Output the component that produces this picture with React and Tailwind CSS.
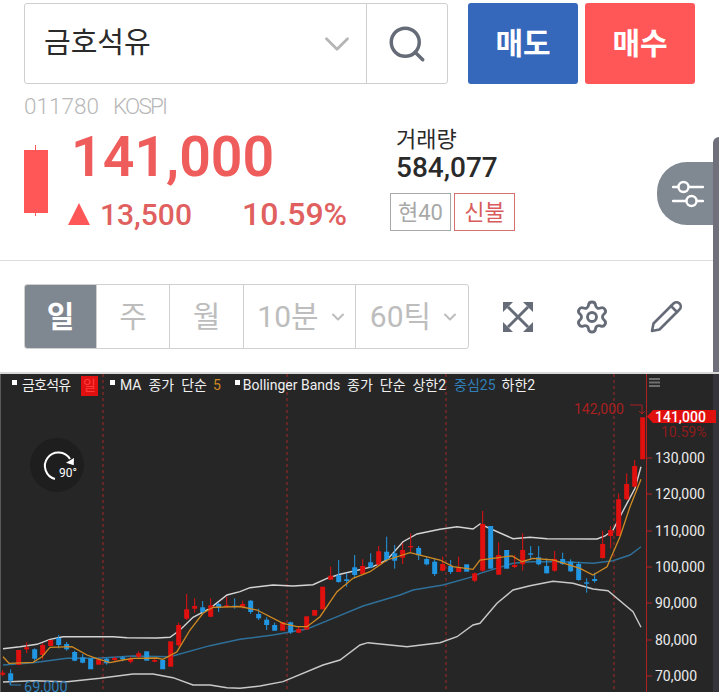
import React from "react";
import { ChevronDown, Search, Settings } from "lucide-react";

const FONT = { fontFamily: "Roboto, 'Noto Sans CJK KR', sans-serif" };

// [colour, bodyTop, bodyBottom, wickTop, wickBottom], one candle every 8px
const CANDLES = [
  ["r", 672.7, 674.7, 670, 676], ["b", 673.3, 680.7, 669.3, 685], ["r", 650, 665], ["r", 647.3, 649.3, 642.3, 653.3],
  ["b", 649.3, 658.7, 648.3, 660.7], ["r", 645, 655, 643.3, 659.3], ["r", 640, 646], ["b", 638, 645, 635, 648.3],
  ["b", 644, 649.3, 642, 650.7], ["b", 652, 660.7, 650.7, 661.3], ["b", 657.3, 662.7, 654, 663.3], ["b", 658.3, 669.3],
  ["r", 659.3, 664.7], ["b", 658.7, 663.3, 658, 664.7], ["r", 658, 660, 656.7, 662], ["b", 657.3, 659.3, 656, 661.3],
  ["r", 658.3, 661.7, 656.7, 663.3], ["r", 653.3, 656.7, 651.3, 658.3], ["b", 651.3, 660.7], ["r", 660, 661.7, 658.3, 662.3],
  ["b", 660, 669.3], ["r", 641.3, 666.7], ["r", 625, 645.3, 622.7, 646.7], ["r", 609.3, 618.7, 594, 620],
  ["r", 606, 608.7, 598.3, 612.7], ["b", 607.3, 612, 601, 614], ["r", 605.3, 616.7, 598.3, 617.3], ["b", 604, 608, 602.7, 612],
  ["r", 605.3, 607, 596.7, 607.3], ["b", 605.7, 607, 598.3, 608.7],
  ["r", 604, 606.7, 600.7, 608.7], ["b", 600.7, 612, 600, 614], ["b", 614, 618.3, 608.7, 620], ["b", 619.7, 625, 617.3, 630],
  ["b", 625, 630.7, 622.7, 630.7], ["r", 622, 630.7], ["b", 622.3, 632.3, 621.7, 634], ["r", 629, 632.7, 626.7, 633.3],
  ["r", 616.3, 629.7], ["r", 610, 615.7], ["r", 586.7, 609.3], ["r", 575.7, 579.7, 566.7, 580],
  ["b", 575.3, 582, 560, 582.7], ["b", 579.3, 581, 573.3, 586.7], ["b", 567.3, 575, 555, 578.3], ["r", 566, 574, 559.3, 574.7],
  ["b", 562.3, 567.3, 553.3, 568.3], ["r", 551.3, 564.7, 546, 565.3], ["b", 551.7, 560, 536.7, 561.7], ["b", 553.3, 560.7, 545, 568.7],
  ["r", 550, 557.7, 543.3, 564], ["r", 546, 547.3, 533.3, 552.7], ["b", 548, 555.3, 546, 560], ["b", 559, 564.3, 556.7, 565.3],
  ["b", 561.7, 574, 558.3, 576], ["r", 564, 570.7, 556.7, 571.3], ["b", 566, 572, 560, 574], ["r", 567.3, 572, 556.7, 572],
  ["b", 564.3, 571.7], ["r", 573.3, 580.7, 572.7, 582],
  ["r", 524, 570.7, 511, 571.7], ["b", 526, 568.7], ["r", 555, 574.7, 542.3, 574.7], ["b", 550, 568.7],
  ["r", 565, 567, 555, 568.3], ["r", 550, 564.3, 533.3, 570.7], ["b", 553.3, 554.7, 546, 560], ["b", 557.3, 564.3, 546, 565.3],
  ["b", 566, 573.3, 558.3, 573.3], ["r", 559, 570.7, 551, 571.7], ["b", 559, 564, 552.7, 565], ["b", 561.7, 571.3, 559.3, 572],
  ["b", 564, 580, 561.7, 580.7], ["b", 582.3, 583.7, 578.3, 592.7], ["b", 579, 581, 572.7, 582.7], ["r", 544, 558, 530.7, 558.7],
  ["r", 530, 536, 526, 548.3], ["r", 499.3, 536, 493.3, 536], ["r", 484, 499.3, 473.3, 500], ["r", 466, 486.7, 460, 487.3],
  ["r", 417.3, 459.3],
];

const UPPER = "3,648.7 20,646.7 37,644.3 50,639.3 63,636.7 113,636.7 127,637.7 157,638 170,637.3 180,630 193,617.3 210,608.3 227,595 240,591.7 250,587.7 273,585 293,586 313,584.7 327,578.3 340,574.3 373,566.7 387,560 403,541.7 417,534 440,529.3 457,526.7 473,529 480,524 513,538.7 530,537.3 547,538.7 597,539 605,536 613,530 627,503.3 635,488.3 641,466.7";
const LOWER = "3,682 33,680.7 67,681.7 100,678.3 133,674 153,674 173,677.7 193,685 210,685 227,687.7 240,688.3 260,686 283,681.7 323,665 340,660 360,645 368,642.7 407,646.7 440,642.7 457,636.7 473,625 480,623.3 497,603.3 513,590 530,585.7 553,581.3 573,583.3 593,589 608,590.7 633,611.7 641,627.3";
const MIDDLE = "3,665 33,662.7 67,658.3 97,658.3 133,656 170,656.7 210,645.7 240,639.3 273,635 307,629 333,618.3 363,606 400,595 413,590 443,585 473,576.7 480,573.3 513,563.3 530,561.7 563,561.7 593,563.3 613,560.7 630,555 641,546.7";
const MA5 = "3,656.7 9,663.3 33,662.3 42,656.7 50,647.3 72,646.7 87,655 97,658.7 110,662.7 123,660 133,658.3 157,658 163,659.3 177,651.7 190,630 203,613.3 213,607.3 240,606.5 257,610 283,623.3 297,626.7 307,626.7 320,616.7 337,591.7 353,578.3 370,571.7 387,560 410,552.7 440,560 453,566.7 473,569.3 480,560 500,557.3 512,556 522,561.7 533,558.3 553,560 580,568.3 593,575 607,566.7 620,536.7 630,506.7 641,479.3";

const AXIS = [
  ["130,000", 458], ["120,000", 494], ["110,000", 531], ["100,000", 567],
  ["90,000", 603], ["80,000", 640], ["70,000", 676],
];

function ExpandIcon() {
  return (
    <svg width="32" height="32" viewBox="0 0 32 32" fill="none">
      <path d="M6 6 L26 26 M26 6 L6 26" stroke="#666c77" strokeWidth="3" />
      <path d="M1 1 H11 L1 11 Z M31 1 H21 L31 11 Z M1 31 H11 L1 21 Z M31 31 H21 L31 21 Z" fill="#666c77" />
    </svg>
  );
}

function PenIcon() {
  return (
    <svg width="32" height="32" viewBox="0 0 32 32" fill="none" stroke="#666c77" strokeWidth="2.6" strokeLinejoin="round" strokeLinecap="round">
      <path d="M2 30 L3.5 22.5 L21 5 L27 11 L9.5 28.5 Z" />
      <path d="M21 5 L23.5 2.5 A3.6 3.6 0 0 1 29.5 8.5 L27 11" />
    </svg>
  );
}

function SliderIcon() {
  return (
    <svg width="32" height="28" viewBox="0 0 32 28" fill="none" stroke="#fff" strokeWidth="2.4" strokeLinecap="round">
      <path d="M1 7 H6 M17 7 H31 M1 21 H14 M25 21 H31" />
      <circle cx="11.5" cy="7" r="5" />
      <circle cx="19.5" cy="21" r="5" />
    </svg>
  );
}

function Legend() {
  return (
    <div className="absolute left-0 top-0 flex h-[23px] w-[640px] items-center pl-[12px] text-[14px] whitespace-nowrap text-[#f0f0f0]">
      <span className="mb-[6px] h-[5px] w-[5px] bg-white" />
      <span className="ml-[5px] w-[51px] tracking-[-0.8px]">금호석유</span>
      <span className="ml-[8px] flex h-[20px] w-[17px] items-center justify-center bg-[#e01010] text-[#ff3a3a]">일</span>
      <span className="mb-[6px] ml-[12px] h-[5px] w-[5px] bg-white" />
      <span className="ml-[5px]">MA&nbsp; 종가&nbsp; 단순</span>
      <span className="ml-[6px] text-[#d08a22]">5</span>
      <span className="mb-[6px] ml-[14px] h-[5px] w-[5px] bg-white" />
      <span className="ml-[3px]">Bollinger Bands&nbsp; 종가&nbsp; 단순&nbsp; 상한2</span>
      <span className="ml-[8px] text-[#2f7fb8]">중심25</span>
      <span className="ml-[6px]">하한2</span>
    </div>
  );
}

function Chart() {
  return (
    <div className="relative h-[320px] w-full overflow-hidden border-t-2 border-[#d8d8d8] bg-[#262626]">
      <svg width="719" height="318" viewBox="0 374 719 318" className="absolute left-0 top-0 block">
        <rect x="0" y="374" width="1" height="318" fill="#5a5a5a" />
        <rect x="713" y="374" width="6" height="318" fill="#34343a" />
        {[103, 287, 446, 614].map((x) => (
          <line key={x} x1={x} x2={x} y1="374" y2="692" stroke="#7d2626" strokeWidth="1.5" strokeDasharray="3 3" />
        ))}
        <line x1="646.5" x2="646.5" y1="374" y2="692" stroke="#b02222" />
        {AXIS.map(([label, y]) => (
          <g key={label}>
            <line x1="646" x2="652" y1={y} y2={y} stroke="#b02222" />
            <text x="655" y={y + 5} fontSize="14" fill="#ececec" style={FONT}>{label}</text>
          </g>
        ))}

        <polyline points={LOWER} fill="none" stroke="#c9c9c9" strokeWidth="1.4" />
        <polyline points={UPPER} fill="none" stroke="#d4d4d4" strokeWidth="1.4" />
        <polyline points={MIDDLE} fill="none" stroke="#2f7099" strokeWidth="1.4" />
        {CANDLES.map(([tone, top, bottom, wickTop, wickBottom], i) => {
          const x = 2.67 + i * 8;
          const fill = tone === "r" ? "#e0100f" : "#2196e3";
          return (
            <g key={i}>
              {wickTop !== undefined && <line x1={x} x2={x} y1={wickTop} y2={wickBottom} stroke={fill} />}
              <rect x={x - 2.5} y={top} width="5" height={Math.max(bottom - top, 1)} fill={fill} />
            </g>
          );
        })}
        <polyline points={MA5} fill="none" stroke="#d08a22" strokeWidth="1.3" />

        <text x="574" y="414" fontSize="14" fill="#a82020" style={FONT}>142,000</text>
        <path d="M630 405 H642 V414 M639 411 L642 414 L645 411" fill="none" stroke="#a82020" />
        <path d="M647 416.5 L653 410 H716 V423 H653 Z" fill="#e0100f" />
        <text x="655" y="421.5" fontSize="14" fontWeight="500" fill="#fff" style={FONT}>141,000</text>
        <text x="661" y="437" fontSize="14" fill="#8c1c1c" style={FONT}>10.59%</text>
        <path d="M649 379 H660 M649 382.500 H660 M649 386 H660" stroke="#6e6e6e" strokeWidth="2" />
        <path d="M10 681 V685 H21" fill="none" stroke="#2f7fb8" />
        <text x="24" y="691.5" fontSize="14.5" fill="#2f7fb8" style={FONT}>69,000</text>

        <circle cx="57" cy="465" r="27" fill="#1e1e1e" />
        <path d="M70 459 A13.500 13.500 0 1 0 55 479" fill="none" stroke="#fff" strokeWidth="2" />
        <path d="M74 458 L73.700 465.300 L66 462.700 Z" fill="#fff" />
        <text x="59" y="477" fontSize="12" fill="#fff" style={FONT}>90°</text>
      </svg>
      <Legend />
    </div>
  );
}

function TabCell({ width, active, children }) {
  return (
    <div className={`flex h-full items-center justify-center border-r border-[#d0d0d0] last:border-r-0 ${width} ${active ? "bg-[#7f8791] font-bold text-white" : "text-[#bdbdbd]"}`}>
      {children}
    </div>
  );
}

export default function App() {
  return (
    <div className="relative h-[692px] w-[719px] overflow-hidden bg-white text-[#2a2a2a]" style={FONT}>
      <div className="flex items-start pl-[24px] pt-[3px]">
        <div className="flex h-[81px] w-[424px] rounded-[3px] border border-[#cfcfcf]">
          <div className="flex flex-1 items-center justify-between pl-[19px] pr-[8px] text-[29px]">
            <span>금호석유</span>
            <ChevronDown size={42} strokeWidth={1.6} className="text-[#b5b5b5]" />
          </div>
          <div className="flex w-[81px] items-center justify-center border-l border-[#cfcfcf]">
            <Search size={42} strokeWidth={2} className="text-[#666c77]" />
          </div>
        </div>
        <button className="ml-[20px] h-[81px] w-[110px] rounded-[3px] bg-[#3567bb] text-[30px] font-bold text-white">매도</button>
        <button className="ml-[7px] h-[81px] w-[110px] rounded-[3px] bg-[#ff5757] text-[30px] font-bold text-white">매수</button>
      </div>

      <div className="mt-[8px] flex h-[30px] items-center pl-[24px] text-[22.5px] font-light text-[#b8b8b8]">
        <span>011780</span>
        <span className="ml-[14px] tracking-[-1.8px]">KOSPI</span>
      </div>

      <div className="flex h-[138px] pl-[24px]">
        <div className="relative mt-[23px] h-[71px] w-[24px]">
          <div className="absolute bottom-0 left-[11px] top-0 w-[1px] bg-[#ff5757]" />
          <div className="absolute inset-x-0 top-[5px] h-[63px] bg-[#ff5757]" />
        </div>
        <div className="ml-[20px] w-[322px]">
          <div className="ml-[3px] mt-[4px] text-[55.5px] font-semibold leading-[64px] text-[#ee5c5c]">141,000</div>
          <div className="mt-[4px] flex h-[40px] items-center font-medium text-[#e06060]">
            <span className="h-0 w-0 border-x-[11px] border-b-[22px] border-x-transparent border-b-[#ff5757]" />
            <span className="ml-[10px] text-[30px]">13,500</span>
            <span className="ml-[50px] text-[32px]">10.59%</span>
          </div>
        </div>
        <div>
          <div className="ml-[6px] mt-[3px] text-[22px] leading-[30px]">거래량</div>
          <div className="ml-[6px] text-[28px] font-medium leading-[26px]">584,077</div>
          <div className="mt-[12px] flex gap-[3px]">
            <span className="flex h-[38px] w-[61px] items-center justify-center border border-[#a8a8a8] text-[22px] text-[#a8a8a8]">현40</span>
            <span className="flex h-[38px] w-[61px] items-center justify-center border border-[#d87070] text-[22px] text-[#d85c5c]">신불</span>
          </div>
        </div>
      </div>

      <div className="border-t border-[#dcdcdc]" />

      <div className="flex items-center pl-[24px] pt-[23px]">
        <div className="flex h-[65px] w-[445px] overflow-hidden rounded-[3px] border border-[#d0d0d0] text-[30px]">
          <TabCell width="w-[72px]" active>일</TabCell>
          <TabCell width="w-[73px]">주</TabCell>
          <TabCell width="w-[74px]">월</TabCell>
          <TabCell width="w-[112px]">
            <span className="ml-[6px]">10분</span>
            <ChevronDown size={20} strokeWidth={2.4} className="ml-[9px]" />
          </TabCell>
          <TabCell width="w-[112px]">
            <span className="ml-[6px]">60틱</span>
            <ChevronDown size={20} strokeWidth={2.4} className="ml-[9px]" />
          </TabCell>
        </div>
        <div className="ml-[33px] flex items-center gap-[42px]">
          <ExpandIcon />
          <Settings size={36} strokeWidth={1.9} className="mx-[-2px] text-[#666c77]" />
          <PenIcon />
        </div>
      </div>

      <div className="mt-[23px]">
        <Chart />
      </div>

      {/* side handle, sits over the page */}
      <div className="absolute right-0 top-[137px] h-[235px] w-[6px] rounded-tl-[6px] bg-[#6f707c]" />
      <div className="absolute right-[6px] top-[162px] flex h-[63px] w-[56px] items-center justify-center rounded-l-[30px] bg-[#808892] pl-[6px]">
        <SliderIcon />
      </div>
    </div>
  );
}
